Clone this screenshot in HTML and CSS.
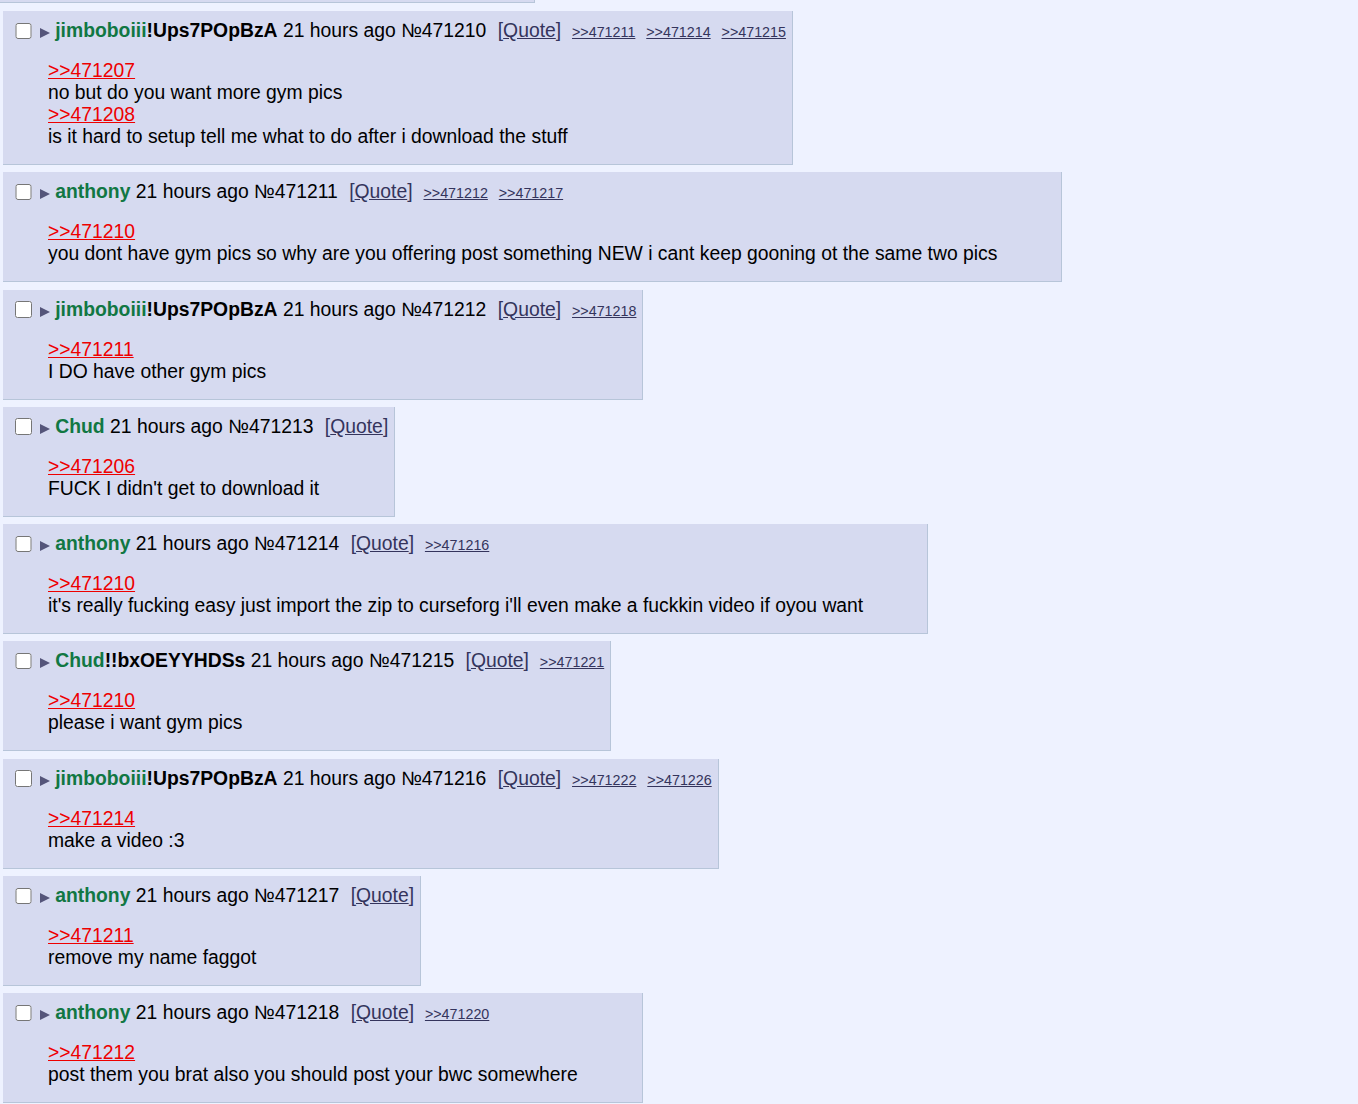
FILE: index.html
```html
<!DOCTYPE html>
<html>
<head>
  <title>Thread</title>
  <link rel="stylesheet" href="styles.css">
</head>
<body>
  <div class="thread">
    <div class="prev-post"></div>

    <div class="post">
      <div class="post-info">
        <input type="checkbox" class="post-check" />
        <span class="menu-btn"></span>
        <span class="name">jimboboiii</span><span class="trip">!Ups7POpBzA</span>
        <span class="date">21 hours ago</span>
        <span class="num">№471210</span>
        <span class="quote-btn">[<a href="#">Quote</a>]</span>
        <a class="backlink" href="#">&gt;&gt;471211</a>
        <a class="backlink" href="#">&gt;&gt;471214</a>
        <a class="backlink" href="#">&gt;&gt;471215</a>
      </div>
      <div class="message">
        <a class="quotelink" href="#">&gt;&gt;471207</a><br>
        no but do you want more gym pics<br>
        <a class="quotelink" href="#">&gt;&gt;471208</a><br>
        is it hard to setup tell me what to do after i download the stuff
      </div>
    </div>

    <div class="post">
      <div class="post-info">
        <input type="checkbox" class="post-check" />
        <span class="menu-btn"></span>
        <span class="name">anthony</span>
        <span class="date">21 hours ago</span>
        <span class="num">№471211</span>
        <span class="quote-btn">[<a href="#">Quote</a>]</span>
        <a class="backlink" href="#">&gt;&gt;471212</a>
        <a class="backlink" href="#">&gt;&gt;471217</a>
      </div>
      <div class="message">
        <a class="quotelink" href="#">&gt;&gt;471210</a><br>
        you dont have gym pics so why are you offering post something NEW i cant keep gooning ot the same two pics
      </div>
    </div>

    <div class="post">
      <div class="post-info">
        <input type="checkbox" class="post-check" />
        <span class="menu-btn"></span>
        <span class="name">jimboboiii</span><span class="trip">!Ups7POpBzA</span>
        <span class="date">21 hours ago</span>
        <span class="num">№471212</span>
        <span class="quote-btn">[<a href="#">Quote</a>]</span>
        <a class="backlink" href="#">&gt;&gt;471218</a>
      </div>
      <div class="message">
        <a class="quotelink" href="#">&gt;&gt;471211</a><br>
        I DO have other gym pics
      </div>
    </div>

    <div class="post">
      <div class="post-info">
        <input type="checkbox" class="post-check" />
        <span class="menu-btn"></span>
        <span class="name">Chud</span>
        <span class="date">21 hours ago</span>
        <span class="num">№471213</span>
        <span class="quote-btn">[<a href="#">Quote</a>]</span>
      </div>
      <div class="message">
        <a class="quotelink" href="#">&gt;&gt;471206</a><br>
        FUCK I didn't get to download it
      </div>
    </div>

    <div class="post">
      <div class="post-info">
        <input type="checkbox" class="post-check" />
        <span class="menu-btn"></span>
        <span class="name">anthony</span>
        <span class="date">21 hours ago</span>
        <span class="num">№471214</span>
        <span class="quote-btn">[<a href="#">Quote</a>]</span>
        <a class="backlink" href="#">&gt;&gt;471216</a>
      </div>
      <div class="message">
        <a class="quotelink" href="#">&gt;&gt;471210</a><br>
        it's really fucking easy just import the zip to curseforg i'll even make a fuckkin video if oyou want
      </div>
    </div>

    <div class="post">
      <div class="post-info">
        <input type="checkbox" class="post-check" />
        <span class="menu-btn"></span>
        <span class="name">Chud</span><span class="trip">!!bxOEYYHDSs</span>
        <span class="date">21 hours ago</span>
        <span class="num">№471215</span>
        <span class="quote-btn">[<a href="#">Quote</a>]</span>
        <a class="backlink" href="#">&gt;&gt;471221</a>
      </div>
      <div class="message">
        <a class="quotelink" href="#">&gt;&gt;471210</a><br>
        please i want gym pics
      </div>
    </div>

    <div class="post">
      <div class="post-info">
        <input type="checkbox" class="post-check" />
        <span class="menu-btn"></span>
        <span class="name">jimboboiii</span><span class="trip">!Ups7POpBzA</span>
        <span class="date">21 hours ago</span>
        <span class="num">№471216</span>
        <span class="quote-btn">[<a href="#">Quote</a>]</span>
        <a class="backlink" href="#">&gt;&gt;471222</a>
        <a class="backlink" href="#">&gt;&gt;471226</a>
      </div>
      <div class="message">
        <a class="quotelink" href="#">&gt;&gt;471214</a><br>
        make a video :3
      </div>
    </div>

    <div class="post">
      <div class="post-info">
        <input type="checkbox" class="post-check" />
        <span class="menu-btn"></span>
        <span class="name">anthony</span>
        <span class="date">21 hours ago</span>
        <span class="num">№471217</span>
        <span class="quote-btn">[<a href="#">Quote</a>]</span>
      </div>
      <div class="message">
        <a class="quotelink" href="#">&gt;&gt;471211</a><br>
        remove my name faggot
      </div>
    </div>

    <div class="post">
      <div class="post-info">
        <input type="checkbox" class="post-check" />
        <span class="menu-btn"></span>
        <span class="name">anthony</span>
        <span class="date">21 hours ago</span>
        <span class="num">№471218</span>
        <span class="quote-btn">[<a href="#">Quote</a>]</span>
        <a class="backlink" href="#">&gt;&gt;471220</a>
      </div>
      <div class="message">
        <a class="quotelink" href="#">&gt;&gt;471212</a><br>
        post them you brat also you should post your bwc somewhere
      </div>
    </div>
  </div>
</body>
</html>
```

FILE: styles.css
```css
body {
  margin: 0;
  background: #eef2ff;
  color: #000;
  font-family: "Liberation Sans", Arial, sans-serif;
  font-size: 19.33px;
  overflow: hidden;
}

.thread {
  padding-left: 3px;
}

.prev-post {
  width: 534px;
  height: 2px;
  margin-left: -3px;
  margin-bottom: 8px;
  background: #d6daf0;
  border-right: 1px solid #b7c5d9;
  border-bottom: 1px solid #b7c5d9;
}

.post {
  width: fit-content;
  background: #d6daf0;
  border-right: 1px solid #b7c5d9;
  border-bottom: 1px solid #b7c5d9;
  padding: 9px 6px 16px 0;
  margin-bottom: 7.3px;
}

.post-info {
  white-space: nowrap;
  height: 22px;
  line-height: 22px;
  padding-left: 12px;
}

.post-check {
  width: 16.5px;
  height: 16.5px;
  margin: 0 3px 0 0;
  vertical-align: -2px;
}

.menu-btn {
  display: inline-block;
  width: 0;
  height: 0;
  border-top: 5.5px solid transparent;
  border-bottom: 5.5px solid transparent;
  border-left: 10px solid #55557a;
  vertical-align: -1px;
}

.name {
  color: #117743;
  font-weight: bold;
}

.trip {
  font-weight: bold;
}

.quote-btn {
  color: #34345c;
  margin-left: 6px;
}

.quote-btn a {
  color: #34345c;
}

.backlink {
  color: #34345c;
  font-size: 14.3px;
  margin-left: 5.5px;
}

.message {
  margin-top: 18px;
  margin-right: 58px;
  padding-left: 45px;
  line-height: 22px;
}

.quotelink {
  color: #e00;
}
```
